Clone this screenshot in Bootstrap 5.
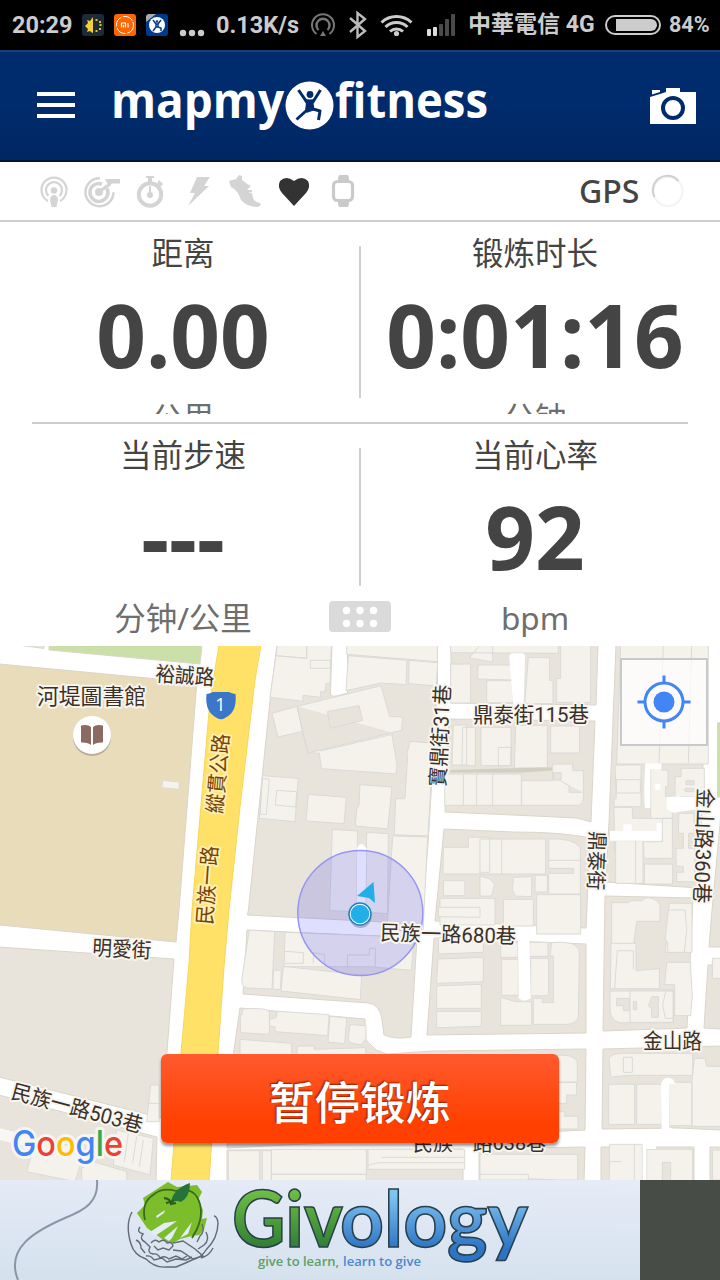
<!DOCTYPE html>
<html lang="zh">
  <head>
    <meta charset="UTF-8" />
    <meta name="viewport" content="width=device-width, initial-scale=1.0" />
    <title>MapMyFitness</title>
    <link
      href="https://cdn.jsdelivr.net/npm/bootstrap@5.3.0/dist/css/bootstrap.min.css"
      rel="stylesheet"
    />
    <style>
      body {
        width: 720px;
        height: 1280px;
        background: #fff;
        color: #444;
        font-family: "Noto Sans", "Noto Sans CJK SC", sans-serif;
      }
      svg {
        display: block;
        flex: none;
      }
      .status-bar {
        height: 50px;
        background: #000;
        color: #ccc;
        font: 700 23.5px/50px Roboto, "Noto Sans CJK TC", sans-serif;
        white-space: nowrap;
      }
      .status-time { width: 70px; }
      .status-speed { width: 94px; padding-left: 3px; }
      .status-carrier { width: 137px; margin-left: -2px; font-size: 23px; }
      .status-level { font-size: 21.500px; line-height: 52px; }
      .app-header {
        height: 112px;
        background: linear-gradient(#002c6f, #002b6c 50%, #002763);
        border-top: 2px solid #1e3f76;
        border-bottom: 2px solid #001334;
      }
      .sensor-bar {
        height: 60px;
        border-bottom: 2px solid #cdcdcd;
      }
      .gps-label {
        font-size: 32px;
        font-weight: 500;
        line-height: 58px;
      }
      .metrics { padding: 0 9px 0 7px; }
      .metric-cell { text-align: center; overflow: hidden; }
      .metric-cell.short { height: 192px; }
      .metric-cell.tall { height: 222px; }
      .metric-name { font-size: 31.500px; line-height: 62px; }
      .metric-value {
        font-size: 87px;
        font-weight: 700;
        line-height: 100px;
        white-space: nowrap;
      }
      .metric-unit {
        padding-top: 2px;
        font-size: 31.500px;
        line-height: 60px;
        color: #6e6e6e;
      }
      .metric-cell.short .metric-unit { padding-top: 4px; }
      .divider-v {
        width: 2px;
        margin: 24px -2px 0 0;
        background: #cdcdcd;
        flex: none;
      }
      .divider-v.first { height: 152px; }
      .divider-v.second { height: 138px; }
      .divider-h {
        height: 2px;
        margin: 8px 23px 0 25px;
        background: #cdcdcd;
      }
      .grip {
        left: 329px;
        bottom: 14px;
        width: 62px;
        height: 31px;
        border-radius: 4px;
        background: #dadada;
      }
      .map-area { height: 534px; }
      .map-label {
        font-family: Roboto, "Noto Sans CJK TC", sans-serif;
        font-size: 21px;
        fill: #3b3028;
        stroke: #f7f5ef;
        stroke-width: 4;
        stroke-linejoin: round;
        paint-order: stroke;
      }
      .road-label { fill: #74440b; stroke: #ffefb0; }
      .bldg path {
        fill: #f4f2eb;
        stroke: #dadad8;
        stroke-width: 3;
      }
      .bldg .gap { fill: #e8e4dc; }
      .bldg .lane { fill: #fff; stroke: none; }
      .btn-pause {
        left: 161px;
        top: 408px;
        width: 398px;
        height: 89px;
        padding: 0;
        border: 0;
        border-radius: 6px;
        background: linear-gradient(#ff5a2e, #ff4000 80%);
        box-shadow: 0 3px 3px rgba(0, 0, 0, 0.4);
        color: #fff;
        font: 500 45.500px/92px "Noto Sans CJK SC", sans-serif;
        text-shadow: -1px -1px 2px rgba(110, 20, 0, 0.8);
      }
      .btn-pause:hover {
        color: #fff;
      }
    </style>
  </head>
  <body class="overflow-hidden">
    <div class="status-bar d-flex align-items-center">
      <span class="status-time ms-2 ps-1">20:29</span>
      <!-- notification icons -->
      <svg width="135" height="50" viewBox="78 0 135 50">
        <rect x="82" y="14" width="22" height="22" rx="3" fill="#1d2b38" />
        <path d="M93 17v16a8 8 0 0 1-3-2l-3 1 1-3-3-3 3-3-1-3 3 1z" fill="#f5cf35" />
        <path d="M96.500 19v2M99 22h2M99.500 25h2M99 29h2M96.500 30v2" stroke="#e5bd1f" stroke-width="2" />
        <rect x="114" y="14" width="22" height="22" rx="3" fill="#ff6500" />
        <circle cx="125" cy="25" r="8.500" fill="none" stroke="#fff" stroke-width="1" stroke-dasharray="11 1.500" />
        <path d="M121.500 27.500v-4.500h4v4.500M123.500 25v2.500M128 23v4.500" fill="none" stroke="#fff" stroke-width="1.200" />
        <rect x="146" y="14" width="22" height="22" rx="3" fill="#003a8f" />
        <path d="M146 22v-6l2-2h8z" fill="#aaa" />
        <circle cx="157" cy="25" r="8" fill="#fff" />
        <path d="M153 20l3 4v3l-3 4M161 20l-3 4v3l3 1v3M156 24h2v3h-2z" stroke="#003a8f" stroke-width="1.500" fill="none" />
        <circle cx="157" cy="21.500" r="1.300" fill="#003a8f" />
        <g fill="#ccc">
          <circle cx="183" cy="33" r="3.200" /><circle cx="192" cy="33" r="3.200" /><circle cx="201" cy="33" r="3.200" />
        </g>
      </svg>
      <span class="status-speed">0.13K/s</span>
      <!-- hotspot, bluetooth, wifi, signal -->
      <svg width="163" height="50" viewBox="307 0 163 50">
        <g fill="none" stroke="#777" stroke-width="2">
          <path d="M316.500 34a11 11 0 1 1 13 0" />
          <path d="M318.500 30a6.500 6.500 0 1 1 9 0" stroke-width="2.400" />
          <path d="M323 31l3 5h-6z" fill="#777" stroke="none" />
        </g>
        <path d="M350 18l15 13-7.500 6V13l7.500 6-15 13" fill="none" stroke="#bbb" stroke-width="2.400" />
        <g fill="none" stroke="#ccc" stroke-width="3">
          <path d="M381.500 22.500a22 22 0 0 1 30 0" />
          <path d="M385.500 27a16 16 0 0 1 22 0" />
          <path d="M390 31.500a9.500 9.500 0 0 1 13 0" />
        </g>
        <circle cx="396.500" cy="33.500" r="2.600" fill="#ccc" />
        <g fill="#ddd">
          <rect x="427" y="29" width="4" height="7" rx="1" /><rect x="433" y="27" width="4" height="9" rx="1" />
        </g>
        <g fill="#4a4a4a">
          <rect x="439" y="24" width="4" height="12" rx="1" /><rect x="445" y="19" width="4" height="17" rx="1" /><rect x="451" y="14" width="4" height="22" rx="1" />
        </g>
      </svg>
      <span class="status-carrier">中華電信 4G</span>
      <svg width="56" height="50" viewBox="605 0 56 50">
        <rect x="606" y="16" width="54" height="18" rx="9" fill="none" stroke="#ccc" stroke-width="2" />
        <path d="M616 19h35a6 6 0 0 1 0 12h-35z" fill="#ccc" />
      </svg>
      <span class="status-level ms-2">84%</span>
    </div>

    <nav class="app-header d-flex">
      <svg width="720" height="108" viewBox="0 52 720 108">
        <path d="M37 94h38M37 105h38M37 116h38" stroke="#fff" stroke-width="4" />
        <g fill="#fff" font-family="Open Sans, sans-serif" font-weight="700" font-size="48">
          <text x="111" y="118" textLength="173" lengthAdjust="spacingAndGlyphs">mapmy</text>
          <text x="335" y="118" textLength="153" lengthAdjust="spacingAndGlyphs">fitness</text>
        </g>
        <circle cx="309.500" cy="105.500" r="24" fill="#fff" />
        <circle cx="310" cy="94.500" r="3.400" fill="#002b6c" />
        <path d="M298.500 90l6.500 9.500 2.500 4-1 7-10 9M320.500 90l-6 9.500-2.500 4 1 5.500 7 2-1.500 9" fill="none" stroke="#002b6c" stroke-width="3" stroke-linejoin="round" />
        <path d="M304 98q6 3 12 0l-3.500 6 1 6.500-7 2.500 1-9z" fill="#002b6c" />
        <path d="M650 97l10-3 6-2v-4h14v4h16v32h-46zM652 90h8v2l-8 2.500z" fill="#fff" />
        <circle cx="673" cy="108" r="10" fill="#fff" stroke="#002b6c" stroke-width="4" />
      </svg>
    </nav>

    <div class="sensor-bar d-flex">
      <svg width="579" height="58" viewBox="0 162 579 58">
        <g fill="none" stroke="#d4d4d4" stroke-width="2.200">
          <path d="M48 201a12.500 12.500 0 1 1 12 0" />
          <path d="M48.500 196a8 8 0 1 1 11 0" />
        </g>
        <circle cx="54" cy="190.500" r="3.200" fill="#d4d4d4" />
        <path d="M50 200a4 5 0 0 1 8 0l-1.500 7h-5z" fill="#d4d4d4" />
        <g fill="none" stroke="#d4d4d4">
          <path d="M100 178.200a14 14 0 1 0 13.500 14" stroke-width="2.500" />
          <path d="M107 188.500a9 9 0 1 1-5-4.500" stroke-width="3.500" />
          <path d="M99 192l11-8" stroke-width="3" />
        </g>
        <circle cx="99" cy="192" r="4" fill="#d4d4d4" />
        <path d="M105 179h15v4.500h-8l-3 3z" fill="#d4d4d4" />
        <circle cx="150" cy="194.500" r="11.200" fill="none" stroke="#d4d4d4" stroke-width="4" />
        <path d="M146 176h8v2h-2v6h-4v-6h-2zM157 184l2-4 4 4-3 3z" fill="#d4d4d4" />
        <path d="M150 186v9" stroke="#d4d4d4" stroke-width="2" />
        <circle cx="150" cy="195" r="3" fill="#d4d4d4" />
        <path d="M197 177h13l-6 9h5l-21 20 7-13h-5z" fill="#d4d4d4" />
        <path d="M229 181l7-2 3-4 3 1v4q5 4 9 6l-4 4h5l0 2-4 1h4l1 5q1 4 7 5l1 2-3 2q-11 0-17-7-3-10-10-13z" fill="#d4d4d4" />
        <path d="M294 206l-12-13q-5-6-2-12 6-6 14 0 8-6 14 0 3 6-2 12z" fill="#333" />
        <rect x="333.500" y="181.500" width="19" height="19" rx="4" fill="none" stroke="#cacaca" stroke-width="3.200" />
        <path d="M340 175h7q2 0 2 5h-11q0-5 2-5zM338 202h11q0 5-2 5h-7q-2 0-2-5z" fill="#cacaca" />
      </svg>
      <span class="gps-label">GPS</span>
      <svg width="80" height="58" viewBox="639 162 80 58">
        <circle cx="668" cy="191.500" r="14.500" fill="none" stroke="#f3f3f3" stroke-width="2" />
        <path d="M654.500 197a14.500 14.500 0 0 1 24-16" fill="none" stroke="#d2d2d2" stroke-width="2.200" />
      </svg>
    </div>

    <main class="metrics position-relative">
      <div class="d-flex">
        <div class="metric-cell short col">
          <div class="metric-name">距离</div>
          <div class="metric-value">0.00</div>
          <div class="metric-unit">公里</div>
        </div>
        <div class="divider-v first"></div>
        <div class="metric-cell short col">
          <div class="metric-name">锻炼时长</div>
          <div class="metric-value">0:01:16</div>
          <div class="metric-unit">分钟</div>
        </div>
      </div>
      <div class="divider-h"></div>
      <div class="d-flex">
        <div class="metric-cell tall col">
          <div class="metric-name">当前步速</div>
          <div class="metric-value">---</div>
          <div class="metric-unit">分钟/公里</div>
        </div>
        <div class="divider-v second"></div>
        <div class="metric-cell tall col">
          <div class="metric-name">当前心率</div>
          <div class="metric-value">92</div>
          <div class="metric-unit">bpm</div>
        </div>
      </div>
      <div class="grip position-absolute">
        <svg width="62" height="31" viewBox="0 0 62 31" fill="#fff">
          <circle cx="17.500" cy="9.500" r="3.700" /><circle cx="31" cy="9.500" r="3.700" /><circle cx="44.500" cy="9.500" r="3.700" />
          <circle cx="17.500" cy="22.500" r="3.700" /><circle cx="31" cy="22.500" r="3.700" /><circle cx="44.500" cy="22.500" r="3.700" />
        </svg>
      </div>
    </main>

    <div class="map-area position-relative">
      <svg width="720" height="534" viewBox="0 646 720 534">
        <rect y="646" width="720" height="534" fill="#fff" />

        <!-- city blocks -->
        <g fill="#e8e4dc" stroke="#dbd5c9" stroke-width="1">
          <path d="M18 645h26v3.500z" />
          <path d="M49 645h153l-2 19-151-14z" fill="#cbdfa9" />
          <path d="M-1 664l159 15 39 2-18 229-3 32L-1 925z" fill="#e8dcbb" />
          <path d="M-1 947l175 12-12 159L-1 1077z" />
          <path d="M-1 1095l158 42-1 44H-1z" />
          <path d="M277 645h55l-1.500 48q0 4 6 3l11-3 0-48h90v40l-9 152-7 87-174-9 1-6 22-213z" />
          <path d="M247 930l170 8-6 99q-14 3-27-2l-2-15q-2-16-14-17l-125-9z" />
          <path d="M240 1008l125 11 1 21 10 10 11 4 46-3 153-2-1 81-358 18 3-70z" />
          <path d="M227 1150l236-1v32H227zM479 1149l106-2-1 34H479z" />
          <path d="M451 645h147l-2 60-145-2z" />
          <path d="M449 719l146 2-4 101-14-4-64-3-68-3z" />
          <path d="M444 829l69 3q50 0 77 6l-4 90-151-7z" />
          <path d="M434 938l152 6v89l-159 2z" />
          <path d="M616 645h92l-5 120-3 123-94-6 3-60z" />
          <path d="M605 896l88 2-6 130-84 3z" />
          <path d="M717.500 723l4-1v75l-4 0z" fill="#cbdfa9" />
          <path d="M721 813l-9 97-3 37h12zM708 965h13v64l-17-1z" />
          <path d="M603 1049l118-3v84l-43-2-76 1z" />
          <path d="M601 1147l93 0v34h-93zM710 1147h11v34h-11z" />
        </g>

        <!-- main road -->
        <path d="M219 645h42l-6 35-15 127-11 103-5 57-6 86-9 128h-38l10-128 8-90 3-53 18-210z" fill="#ffe168" stroke="#f7d75a" stroke-width="1" />

        <!-- buildings, drawn per tile at three units to the pixel -->
        <g class="bldg">
          <g transform="translate(0 640) scale(.33333)">
            <path d="M488 421l50 5-1 22-52-5z" />
          </g>
          <g transform="translate(240 640) scale(.33333)">
            <path d="M112 15h88v40l-92-8zM108 47l92 8v-40h74l-4 115h-12l-3 25h-13v17l-53-6v18l-99-12zM211 61h60v24h-60zM320 15h272v50l-272-22zM325 47l176 14-3 73-75-5-105 23zM507 61l86 7-4 70-83-7z" />
            <path d="M96 220l75-21 252-62 26 92 39 2-3 40-27 6-2 8 15 90-3 27-224-16-6-46-35-2-16-64-73 17zM171 199l33 140 254-61M240 333l218-50M187 273l-16-74" />
            <path class="gap" d="M262 215l95-18 11 44-97 24z" />
            <path d="M68 407l107 8-10 130-107-10zM66 415l22 3-9 106-18-2zM110 451l60 4-3 46-61-6zM205 463l114 9-7 79-114-8zM360 434l96 7-13 126-97-9 4-51 7-10zM510 304l70 6-16 278-101-4 4-108h28l8-130h-3z" />
            <path d="M277 568l76 5-1 35-3 207-80-3zM380 577l65 4-2 240-66-4zM458 588l105 3-14 285-108-8z" />
            <path class="lane" d="M351 625q12-26 28 0l-4 250h-26z" />
          </g>
          <g transform="translate(480 640) scale(.33333)">
            <path d="M-88 15h323v25l-323-2zM-88 72h60v117h-60zM-6 75h102l-1 45-102-3zM20 122h80v66h-80zM145 53h64v68h10v70h-85zM242 15h90v172h-102v-72h12zM0 15l38 3v48l-70-12z" />
            <path class="lane" d="M88 52q0-12 10-12h28q9 0 9 12l-4 143h-31z" />
            <path d="M-80 255h40v120h-44zM-52 262h38v115h-40zM3 262h90v115h-90zM55 322h38v55h-38zM107 256h95v128h-99zM212 258h87v81h-87zM-106 402h230v94h-230zM-50 402v94M-10 402v94M38 402v94M125 422h93v-50h60v20h32v85q-3 19-18 19h-167zM217 408l50 29v20h40" />
            <path class="gap" d="M220 398h23v22h-23z" />
            <path d="M-110 622h75v-30h64v105h-20l-15 5h-105zM-110 722h65v45h-65zM0 597h197v105h-197zM65 597v105M206 597q70-4 95 25v140h-95v-62h75v-15h-75zM206 661h95M0 708q55 10 40 40l-5 20h-35zM100 712l55-2v60l-50-2-8-20zM165 706h37v50h-37zM-120 775h165v80h-165zM70 778h90v80h-90zM170 764h132v118h-132z" />
            <path d="M422 15h263v357h-275zM550 15l-13 355M635 15l-10 355M405 375h78v125h-81v-24h7zM409 419h72v40h-72zM402 502h55v33h120v60h-32v60h-52v-22h-90z" />
            <path d="M545 372h-33v163h65v-65h-20v-30h7v-50h-19zM585 410h18v-25h70v85h-70v14h-18zM407 602h82v128h-82zM467 602v126M493 672h85v60h-85zM492 655h85v-120h-30v70h-57zM597 520h45v60h-16v45h18v100h-54v-28h20v-18h-22v-54h22v-45h-15z" />
            <path class="gap" d="M618 422h24v12h-24zM615 445h26v10h-26z" />
            <path class="lane" d="M495 370h50v18h-34v116h-15q-6-20 0-134zM526 432h15v18h-15zM560 470h80l60 10v30l-60-1-60 9-20-11zM390 573h40v-20h25v20h75v-24h15v53h-155z" />
            <path d="M395 788h50l10-6h30l10-8q30-4 45 20v50h-70l-12 93h-63zM568 790h68v147h-80z" />
          </g>
          <g transform="translate(0 910) scale(.33333)">
            <path d="M452 525h25v110h-37zM445 580h33M350 660l110 25-10 110-110-30zM385 670l-12 85M410 680l-12 80M430 690l-12 80M110 680l145 40-30 95-145-30zM245 775l35-20 100 30v30h-135z" />
            <path class="lane" d="M0 655l100 25-6 34L0 690z" opacity=".7" />
          </g>
          <g transform="translate(240 910) scale(.33333)">
            <path d="M28 60l76 5-8 172-75-3q-20-5-15-30zM100 181h24l-3 57h-22zM130 169l235 26-4 74-238-26zM135 67l388 15-9 99-127-11h-255zM135 124l55 4v32h-55M220 160v-32l34 6v30M322 170v-35h65l2-20h17v55" />
            <path d="M595-8h125v30l-125-2zM595 82h135v45l-135 5zM594 147l136-5v73l-140 5zM590 228l134-5v72h-134zM590 304h134v45l-134 4z" />
            <path d="M10 297q60-5 78 6v70l-87-5v-43zM112 304l155 10-4 63-158-12v-14l-16-4v-18l20-7zM270 319l50 5-6 77-50-5zM330 344l48 3v40l-16 18-36-8v-23zM0 388l155 12v40h-155zM172 408h50v10l155-5v30h-207z" />
            <path d="M-35 722h94v90h-94zM67 722h27v90h-27zM94 718h285v75h-285zM94 793h285v20h-285zM384 718h290v60h-290zM384 766l22-6 12-2h256M425 742h248" />
          </g>
          <g transform="translate(480 910) scale(.33333)">
            <path d="M62 97h52v45h-52zM65 148h50v108h-50zM62 262l45 13h48v71h-93zM149 97h55v42h-55zM152 145h54v112h-54zM215 98q80-8 83 30l-3 195q-10 20-35 20h-100v-78h27l0 13h33v-140h-10z" />
            <path class="lane" d="M114 60h34l4 205q-20 14-36 0z" />
            <path d="M393 100h75v82l70-6v60h-147zM404 235l8-113h48v56M560 157h72v20l5 80-5 60h-48v-93h-30zM390 243h190v95h-160q-30-5-30-45zM450 240h130v97h-130zM558 240h22v85h-24l-8-40z" />
            <path class="gap" d="M410 265h38v37h-18v-15h-20zM460 275h10v24h-10zM515 260h20v62h-20v-25l-9-10z" />
            <path d="M565 0h50l5 60-7 67h-50v-30l-7-10zM387 445q8-15 40-15h211v66h-186l-60 5zM430 442h27v45h-27zM386 523h78v120h-78zM470 523h76v120h-76zM566 517h70v130h-68zM643 445h32l5 24h50v180h-95v-130z" />
            <path class="lane" d="M543 530q0-26 20-27 20 2 22 18l-17 2v130l30 8h-53z" />
            <path d="M230 436q50-5 62 20v60h-62zM230 517h60v38h-30v25h-30zM230 605h24v14h40v38h-64zM0 733h293v77h-293zM0 793h145v16h80M388 703h99v110h-99zM388 755h38M463 703v107M500 718h138v95h-138zM697 720h30v90h-30zM697 145h30v60h-30z" />
            <path class="gap" d="M547 757h25v55h-25z" />
            <path class="lane" d="M488 700h40v17h-29v95h-11z" />
          </g>
        </g>
        <path d="M450 770l90-2.500 12 0v3l-30 2h-72z" fill="#d0cfc2" />

        <!-- position accuracy -->
        <circle cx="360.300" cy="913" r="62.500" fill="#0000ff" fill-opacity=".13" stroke="#9696f2" stroke-width="1.500" />

        <!-- place and street names -->
        <g class="map-label">
          <text x="37" y="704" font-size="21.500" textLength="109" lengthAdjust="spacingAndGlyphs">河堤圖書館</text>
          <text transform="translate(155 681) rotate(4)" textLength="59" lengthAdjust="spacingAndGlyphs">裕誠路</text>
          <text transform="translate(92 955) rotate(3)" textLength="59" lengthAdjust="spacingAndGlyphs">明愛街</text>
          <text transform="translate(445 787) rotate(-87)" textLength="102" lengthAdjust="spacingAndGlyphs">寶鼎街31巷</text>
          <text x="473" y="722" textLength="116" lengthAdjust="spacingAndGlyphs">鼎泰街115巷</text>
          <text transform="translate(590 831) rotate(92)" textLength="59" lengthAdjust="spacingAndGlyphs">鼎泰街</text>
          <text transform="translate(698 788) rotate(92)" textLength="115" lengthAdjust="spacingAndGlyphs">金山路360巷</text>
          <text transform="translate(380 940) rotate(1.500)" textLength="136" lengthAdjust="spacingAndGlyphs">民族一路680巷</text>
          <text x="643" y="1048" textLength="59" lengthAdjust="spacingAndGlyphs">金山路</text>
          <text transform="translate(10 1098) rotate(15)" textLength="135" lengthAdjust="spacingAndGlyphs">民族一路503巷</text>
          <text x="413" y="1150" textLength="133" lengthAdjust="spacingAndGlyphs">民族一路638巷</text>
          <text class="road-label" transform="translate(222 814) rotate(-85)" textLength="80" lengthAdjust="spacingAndGlyphs">縱貫公路</text>
          <text class="road-label" transform="translate(212 925) rotate(-86)" textLength="79" lengthAdjust="spacingAndGlyphs">民族一路</text>
        </g>

        <!-- library pin -->
        <circle cx="92" cy="737" r="19" fill="#b9ae94" />
        <circle cx="92" cy="735" r="19" fill="#fff" />
        <path d="M81 725.500q7-1.500 10 1.500v18q-3-3-10-2.500zM103 725.500q-7-1.500-10 1.500v18q3-3 10-2.500z" fill="#8c6a62" />

        <!-- route shield -->
        <path d="M206.500 694q4-.5 6.500-2h16q2.500 1.500 6.500 2 2 18-10.500 24-4 2.500-8 0-12.500-6-10.500-24z" fill="#3a77c8" />
        <text x="220.500" y="711" text-anchor="middle" font-family="Open Sans, sans-serif" font-size="18" fill="#fff">1</text>

        <!-- own position -->
        <circle cx="360.500" cy="917" r="11" fill="#555" opacity=".35" />
        <circle cx="360" cy="914" r="11" fill="#fff" stroke="#1d82c4" stroke-width="1.500" />
        <circle cx="360" cy="914" r="9.300" fill="#22aee6" />
        <path d="M373.500 882l1.500 21-6-5-12-2z" fill="#22aee6" />

        <!-- locate button -->
        <rect x="621" y="659" width="86" height="86" fill="#fff" fill-opacity=".7" stroke="#c9c9c9" stroke-width="2" />
        <g stroke="#4285f4" fill="none">
          <circle cx="664" cy="702" r="19" stroke-width="3" />
          <path d="M664 675.500v8M664 720.500v8M637.500 702h8M682.500 702h8" stroke-width="3" />
        </g>
        <circle cx="664" cy="702" r="10.500" fill="#4285f4" />

        <text x="12" y="1156" font-family="Inter, sans-serif" font-size="35" font-weight="500" textLength="111" lengthAdjust="spacingAndGlyphs" stroke="#f6f5f0" stroke-width="6" stroke-linejoin="round" paint-order="stroke"><tspan fill="#4285f4">G</tspan><tspan fill="#ea4335">o</tspan><tspan fill="#fbbc05">o</tspan><tspan fill="#4285f4">g</tspan><tspan fill="#34a853">l</tspan><tspan fill="#ea4335">e</tspan></text>
      </svg>
      <button type="button" class="btn btn-pause position-absolute">暂停锻炼</button>
    </div>

    <footer>
      <svg width="720" height="100" viewBox="0 1180 720 100">
        <defs>
          <linearGradient id="adBack" x1=".6" y1="0" x2=".5" y2="1">
            <stop offset="0" stop-color="#e5ebf7" />
            <stop offset="1" stop-color="#d5e2ee" />
          </linearGradient>
          <linearGradient id="adGreen" gradientUnits="userSpaceOnUse" x1="0" y1="1190" x2="0" y2="1248">
            <stop offset="0" stop-color="#6dc043" />
            <stop offset="1" stop-color="#2f7d35" />
          </linearGradient>
          <linearGradient id="adBlue" gradientUnits="userSpaceOnUse" x1="0" y1="1195" x2="0" y2="1262">
            <stop offset="0" stop-color="#80c4f2" />
            <stop offset=".8" stop-color="#2c74c6" />
          </linearGradient>
        </defs>
        <rect y="1180" width="640" height="100" fill="url(#adBack)" />
        <rect x="640" y="1180" width="80" height="100" fill="#474d46" />
        <path d="M97 1180c2 22-12 30-32 38-30 13-60 30-47 62" fill="none" stroke="#8996a8" stroke-width="2" />

        <!-- apple held by two hands -->
        <path d="M143 1198l25-16 9 5 20-2 5 7-4 8 5 10-1 9 5-1-3 12-5 5-7 1-12 3-7 4-7-1-19-14-10-15 8-8z" fill="#7cbd2c" />
        <path d="M156 1216l9-6-1 3-7 5zM150 1232l14-9 13-2-10 7-12 8zM164 1238l14-12-6 12-3 3zM180 1238l12-16-4 12z" fill="#e4ecf4" />
        <path d="M145 1220q-4-17 8-25 9-8 23-4 15-4 21 6 8 14 0 32l-5 9" fill="none" stroke="#3a6a1c" stroke-width="1.800" />
        <path d="M171 1202q2-13 19-19 0 14-9 19-4-2-10 0z" fill="#24743a" />
        <path d="M164 1198q7 1 7 6l5-1M166 1203l8-2" fill="none" stroke="#2c5c1e" stroke-width="2" />
        <g fill="none" stroke="#646a76" stroke-width="1.400">
          <path d="M132 1212q-7 13-1 32 3 11 15 15 9 9 20 8h10q10-4 16-7 9-2 14-10 12-12 12-27-1-7-4-7" />
          <path d="M140 1227q-4 5 3 7-4 5 2 8l5 5q-3 6 3 7 5-1 7 4 5-3 9 1l7-3 6 3 5-3M151 1243q4-5 8-1 5-4 8 1 5-2 6 3l-4 4-6-2-5 2-4-4M173 1243l10-2 12 8 8 7-10 3-12-8-8-1M202 1224q3 8-2 12l-3 6M206 1232q4 8-2 13l-6 4M136 1240q5 2 5 8l4 5M146 1256q5-1 8 4l8-2 5 4 9-3 10 1 6-3M213 1248q-4 8-12 10" />
        </g>

        <g font-family="Lato, sans-serif" font-size="79" font-weight="700" stroke="#29404a" stroke-width="1.600">
          <text x="232" y="1247" fill="url(#adGreen)" textLength="111" lengthAdjust="spacingAndGlyphs">Giv</text>
          <text x="340" y="1247" fill="url(#adBlue)" textLength="188" lengthAdjust="spacingAndGlyphs">ology</text>
        </g>
        <g font-family="Open Sans, sans-serif" font-size="13" font-weight="600">
          <text x="258" y="1266" fill="#5aa265" textLength="81" lengthAdjust="spacingAndGlyphs">give to learn,</text>
          <text x="343" y="1266" fill="#4b87d2" textLength="78" lengthAdjust="spacingAndGlyphs">learn to give</text>
        </g>
      </svg>
    </footer>

    <script src="https://cdn.jsdelivr.net/npm/bootstrap@5.3.0/dist/js/bootstrap.bundle.min.js"></script>
  </body>
</html>
